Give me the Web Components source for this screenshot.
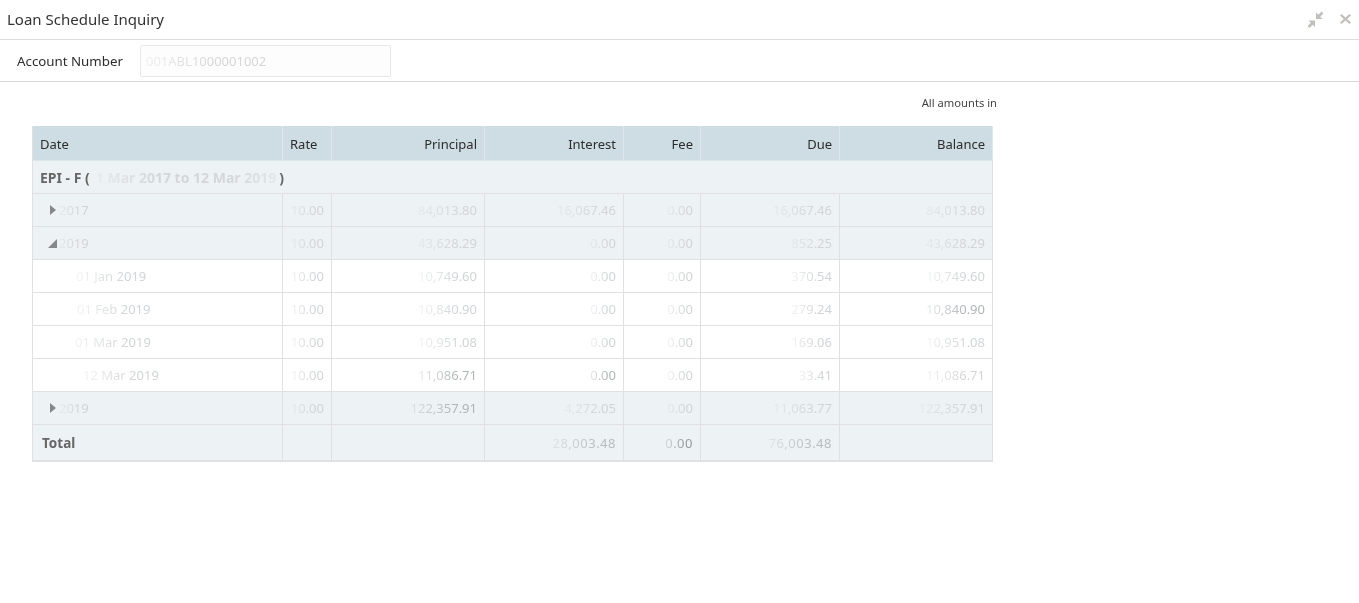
<!DOCTYPE html>
<html>
<head>
<meta charset="utf-8">
<title>Loan Schedule Inquiry</title>
<style>
  html, body { margin: 0; background: #fff; }
  body { font-family: "Noto Sans", "Open Sans", sans-serif; color: #2c2c2c; }
</style>
</head>
<body>
<loan-header>Loan Schedule Inquiry</loan-header>
<account-bar label="Account Number" value="001ABL1000001002"></account-bar>
<loan-schedule note="All amounts in"></loan-schedule>

<script>
customElements.define(
  'loan-header',
  class extends HTMLElement {
    constructor() {
      super();
      this.attachShadow({ mode: 'open' }).innerHTML = `
        <style>
          :host {
            display: flex;
            align-items: center;
            justify-content: space-between;
            box-sizing: border-box;
            height: 40px;
            padding: 0 8px 1px 7px;
            border-bottom: 1px solid #dcdcdc;
            font-size: 15px;
            color: #333;
          }
          .tools { display: flex; align-items: center; gap: 16px; }
          svg { display: block; fill: #c2bfbc; }
        </style>
        <slot></slot>
        <div class="tools">
          <svg width="17" height="17" viewBox="0 0 17 17">
            <path d="M9 1.5V8h6.5l-2.3-2.3L16.4 2.5 14.5.6l-3.2 3.2z"/>
            <path d="M8 9.5V16L5.7 13.7 2.5 16.9.6 15l3.2-3.2L1.5 9.5z"/>
          </svg>
          <svg width="11" height="10" viewBox="0 0 11 10">
            <path d="M1.5 0 5.5 3.5 9.5 0 11 1.4 7.2 5 11 8.6 9.5 10 5.5 6.5 1.5 10 0 8.6 3.8 5 0 1.4z"/>
          </svg>
        </div>
      `;
    }
  }
);

customElements.define(
  'account-bar',
  class extends HTMLElement {
    constructor() {
      super();
      const label = this.getAttribute('label');
      const value = this.getAttribute('value');
      this.attachShadow({ mode: 'open' }).innerHTML = `
        <style>
          :host {
            display: flex;
            align-items: center;
            gap: 17px;
            box-sizing: border-box;
            height: 42px;
            padding: 1px 0 0 17px;
            border-bottom: 1px solid #d6d6d6;
            font-size: 13.3px;
          }
          .label { width: 106px; white-space: nowrap; }
          .box {
            box-sizing: border-box;
            width: 251px;
            height: 32px;
            padding: 0 5px;
            line-height: 31px;
            border: 1px solid #e8e8e8;
            border-radius: 2px;
            background: #fdfdfd;
            font-size: 13px;
            color: #d6d6d6;
          }
          .box span {
            display: inline-block;
            filter: blur(0.6px);
            -webkit-mask-image: linear-gradient(to right, rgba(0,0,0,.3), #000 55%);
            mask-image: linear-gradient(to right, rgba(0,0,0,.3), #000 55%);
          }
        </style>
        <span class="label">${label}</span>
        <div class="box"><span>${value}</span></div>
      `;
    }
  }
);

customElements.define(
  'loan-row',
  class extends HTMLElement {
    constructor() {
      super();
      this.attachShadow({ mode: 'open' }).innerHTML = `
        <style>
          :host {
            display: grid;
            grid-template-columns: 250px 49px 153px 139px 77px 139px 153px;
            height: 33px;
            box-sizing: border-box;
            background: #fff;
          }
          :host([kind="head"]) { background: #cedde4; height: 35px; }
          :host([kind="band"]), :host([kind="total"]) { background: #edf2f5; }
          :host([kind="total"]) { height: 37px; border-bottom: 1px solid #dfe3e3; }
        </style>
        <slot></slot>
      `;
    }
  }
);

customElements.define(
  'loan-cell',
  class extends HTMLElement {
    constructor() {
      super();
      this.attachShadow({ mode: 'open' }).innerHTML = `
        <style>
          :host {
            display: flex;
            align-items: center;
            justify-content: flex-end;
            box-sizing: border-box;
            min-width: 0;
            padding: 0 7px;
            border-right: 1px solid #e0e0e0;
            border-bottom: 1px solid #e0e0e0;
            white-space: nowrap;
            font-size: 13px;
            color: #d2d5d7;
          }
          :host([start]) { justify-content: flex-start; }
          :host([span]) { grid-column: 1 / -1; font-size: 14px; }
          :host([head]) { color: #2c2c2c; border-color: #dce7ec; padding-top: 1px; }
          :host([label]) { color: #666; font-weight: 700; }
          :host([dark]) { color: #b0b4b7; }
          :host([strong]) { color: #b8bdc0; letter-spacing: .5px; padding-top: 1px; }
          :host([strong][dark]) { color: #969b9e; }
          .fade {
            display: inline-block;
            filter: blur(0.6px);
            -webkit-mask-image: linear-gradient(to right, rgba(0,0,0,.25), #000 70%);
            mask-image: linear-gradient(to right, rgba(0,0,0,.25), #000 70%);
          }
          :host([head]) .fade, :host([label]) .fade { filter: none; -webkit-mask-image: none; mask-image: none; }
        </style>
        <slot name="lead"></slot>
        <span class="fade"><slot></slot></span>
      `;
    }
  }
);

customElements.define(
  'loan-schedule',
  class extends HTMLElement {
    constructor() {
      super();
      const note = this.getAttribute('note');
      this.attachShadow({ mode: 'open' }).innerHTML = `
        <style>
          :host {
            display: block;
            width: 965px;
            padding: 13px 0 0 32px;
          }
          .note {
            text-align: right;
            font-size: 11.2px;
            line-height: 16px;
            color: #444;
            margin-bottom: 15px;
          }
          .grid {
            width: 961px;
            box-sizing: border-box;
            border-left: 1px solid #e0e0e0;
          }
          svg { flex: none; }
          .r { margin: 0 3px 0 9px; }
          .d { margin: 0 2px 0 7px; }
          .range {
            display: inline-block;
            margin: 0 3px 0 6px;
            font-weight: 700;
            color: #d3d7da;
            filter: blur(0.7px);
            -webkit-mask-image: linear-gradient(to right, rgba(0,0,0,.2), #000 35%, #000 75%, rgba(0,0,0,.4));
            mask-image: linear-gradient(to right, rgba(0,0,0,.2), #000 35%, #000 75%, rgba(0,0,0,.4));
          }
        </style>
        <div class="note">${note}</div>
        <div class="grid"></div>
      `;

      const right = '<svg slot="lead" class="r" width="6" height="10" viewBox="0 0 6 10"><path d="M0 0l6 5-6 5z" fill="#85888a"/></svg>';
      const down = '<svg slot="lead" class="d" width="9" height="9" viewBox="0 0 9 9"><path d="M9 0v9H0z" fill="#85888a"/></svg>';

      // [row kind, left padding, lead icon, values] - a leading ! marks the darker figures
      const rows = [
        ['band', 8, right, ['2017', '10.00', '84,013.80', '16,067.46', '0.00', '16,067.46', '84,013.80']],
        ['band', 8, down, ['2019', '10.00', '43,628.29', '0.00', '0.00', '852.25', '43,628.29']],
        ['plain', 43, '', ['01 Jan 2019', '10.00', '10,749.60', '0.00', '0.00', '370.54', '10,749.60']],
        ['plain', 44, '', ['01 Feb 2019', '10.00', '10,840.90', '0.00', '0.00', '279.24', '!10,840.90']],
        ['plain', 42, '', ['01 Mar 2019', '10.00', '10,951.08', '0.00', '0.00', '169.06', '10,951.08']],
        ['plain', 50, '', ['12 Mar 2019', '10.00', '!11,086.71', '!0.00', '0.00', '33.41', '11,086.71']],
        ['band', 8, right, ['2019', '10.00', '!122,357.91', '4,272.05', '0.00', '11,063.77', '122,357.91']]
      ];

      const heads = ['Date', 'Rate', 'Principal', 'Interest', 'Fee', 'Due', 'Balance'];
      let html = '<loan-row kind="head">' + heads.map((text, i) =>
        `<loan-cell head ${i < 2 ? 'start' : ''}>${text}</loan-cell>`).join('') + '</loan-row>';

      html += `<loan-row kind="band"><loan-cell span start label>EPI - F (<span class="range">1 Mar 2017 to 12 Mar 2019</span>)</loan-cell></loan-row>`;

      rows.forEach(([kind, pad, icon, values]) => {
        html += `<loan-row kind="${kind}">` + values.map((text, i) => {
          const dark = text[0] === '!';
          const clean = dark ? text.slice(1) : text;
          if (i === 0) {
            return `<loan-cell start style="padding-left:${pad}px">${icon}${clean}</loan-cell>`;
          }
          return `<loan-cell ${dark ? 'dark' : ''}>${clean}</loan-cell>`;
        }).join('') + '</loan-row>';
      });

      html += `<loan-row kind="total">
        <loan-cell start label style="padding-left:9px;padding-top:1px;font-size:13.5px">Total</loan-cell>
        <loan-cell></loan-cell><loan-cell></loan-cell>
        <loan-cell strong>28,003.48</loan-cell>
        <loan-cell strong dark>0.00</loan-cell>
        <loan-cell strong>76,003.48</loan-cell>
        <loan-cell></loan-cell>
      </loan-row>`;

      this.shadowRoot.querySelector('.grid').innerHTML = html;
    }
  }
);
</script>
</body>
</html>
